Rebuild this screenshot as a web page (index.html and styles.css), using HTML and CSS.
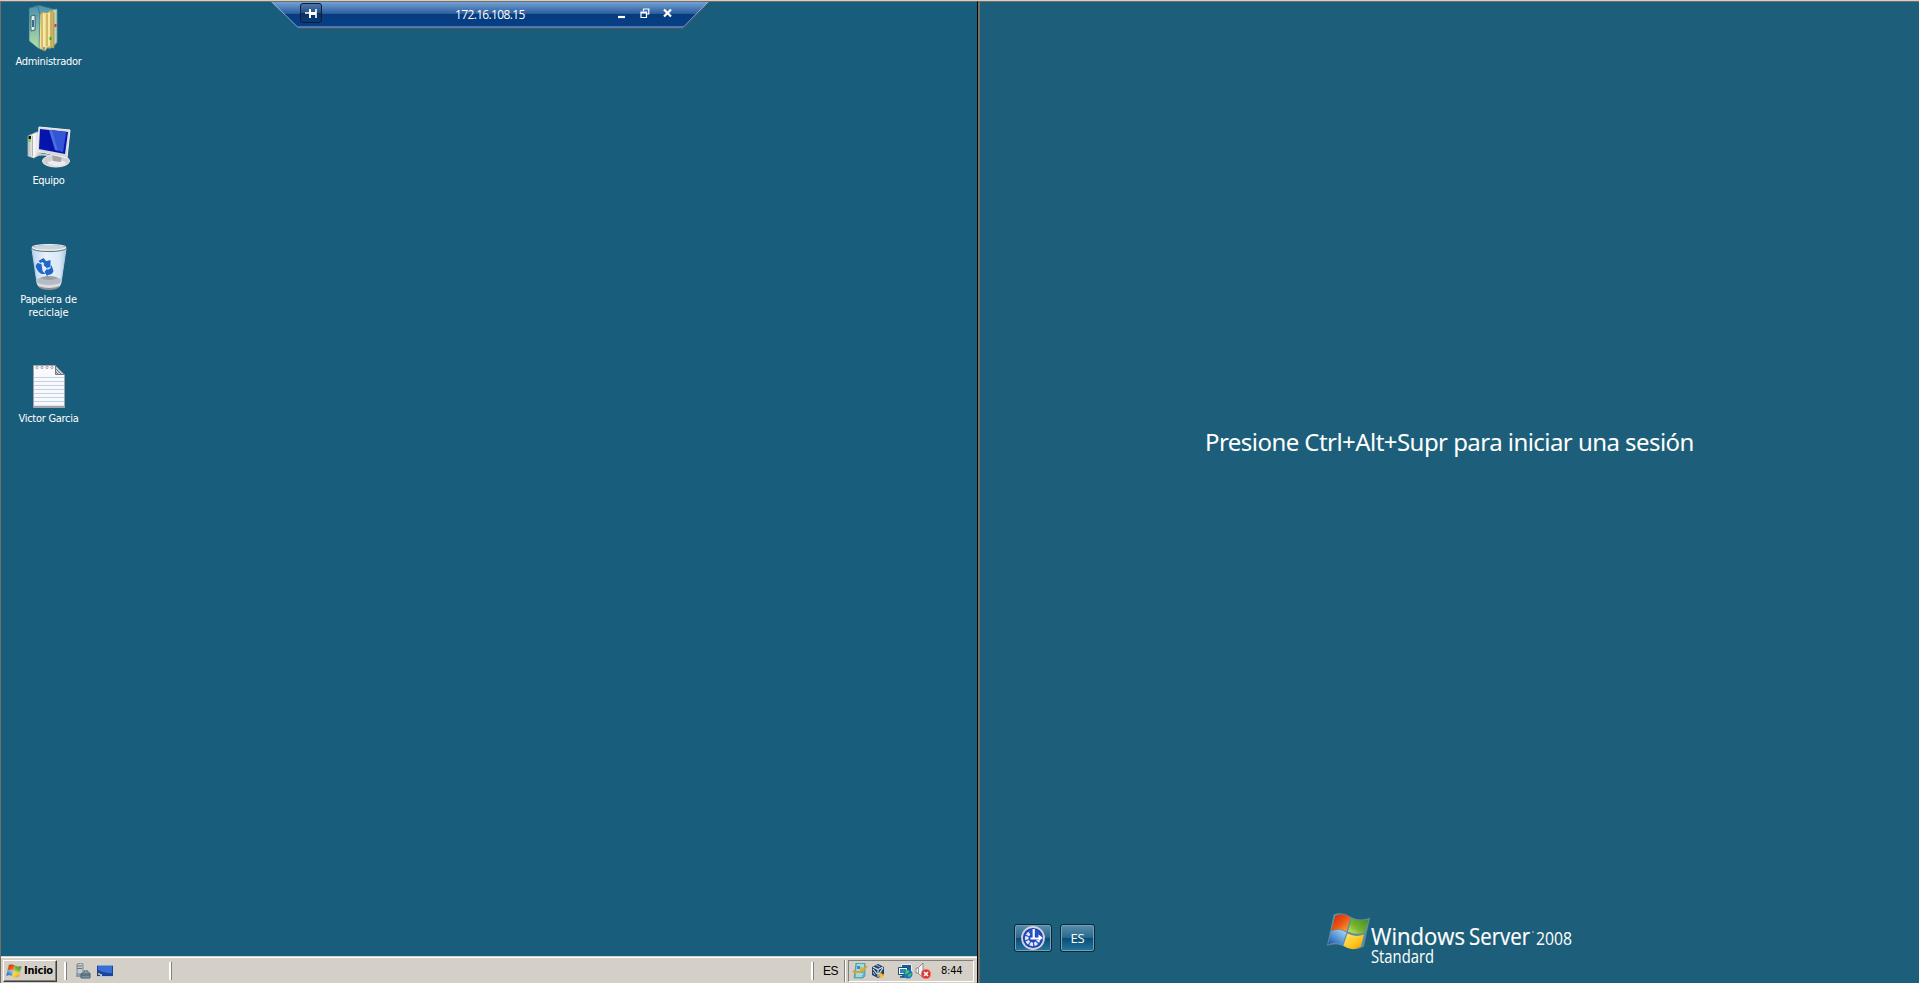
FILE: index.html
```html
<!DOCTYPE html>
<html lang="es">
<head>
<meta charset="utf-8">
<title>Escritorio remoto</title>
<link rel="stylesheet" href="styles.css">
</head>
<body>
<svg width="0" height="0" class="defs">
  <defs>
    <linearGradient id="red" x1="0" y1="0" x2="1" y2="1"><stop offset="0" stop-color="#c9230c"/><stop offset=".55" stop-color="#ee5a14"/><stop offset="1" stop-color="#fcb14c"/></linearGradient>
    <linearGradient id="green" x1="1" y1="0" x2="0" y2="1"><stop offset="0" stop-color="#3f8b1c"/><stop offset=".6" stop-color="#79b52e"/><stop offset="1" stop-color="#d4e873"/></linearGradient>
    <linearGradient id="blue" x1="0" y1="1" x2="1" y2="0"><stop offset="0" stop-color="#1c4da6"/><stop offset=".5" stop-color="#5d9bd8"/><stop offset="1" stop-color="#b8dcf4"/></linearGradient>
    <linearGradient id="yellow" x1="0" y1="0" x2="1" y2="1"><stop offset="0" stop-color="#ffe679"/><stop offset=".6" stop-color="#fec619"/><stop offset="1" stop-color="#f08c0c"/></linearGradient>
    <linearGradient id="page" x1="0" y1="0" x2="1" y2="0"><stop offset="0" stop-color="#f7e9a2"/><stop offset=".75" stop-color="#e8cf78"/><stop offset="1" stop-color="#c0a355"/></linearGradient>
    <linearGradient id="cover" x1="0" y1="0" x2="0" y2="1"><stop offset="0" stop-color="#4e90b0"/><stop offset=".5" stop-color="#83bca8"/><stop offset="1" stop-color="#b5dfa9"/></linearGradient>
    <linearGradient id="metal" x1="0" y1="0" x2="1" y2="0"><stop offset="0" stop-color="#b8b8b8"/><stop offset=".4" stop-color="#fafafa"/><stop offset="1" stop-color="#b3b3b5"/></linearGradient>
    <linearGradient id="bin" x1="0" y1="0" x2="1" y2="0"><stop offset="0" stop-color="#b9d6f0"/><stop offset=".4" stop-color="#e9f1fb"/><stop offset=".8" stop-color="#d9e9f8"/><stop offset="1" stop-color="#a9cbe3"/></linearGradient>
    <linearGradient id="bar" x1="0" y1="0" x2="0" y2="1"><stop offset="0" stop-color="#73a1d3"/><stop offset=".45" stop-color="#2d5f9f"/><stop offset=".47" stop-color="#063b7d"/><stop offset="1" stop-color="#083f86"/></linearGradient>
    <radialGradient id="orb"><stop offset="0" stop-color="#1a3fb4"/><stop offset=".7" stop-color="#2457cf"/><stop offset="1" stop-color="#152b86"/></radialGradient>
    <symbol id="flag" viewBox="0 0 42 37">
      <path fill="#8fb7c4" opacity=".55" d="M6.500 1.500Q15-2 23 3.500q9 5 19 1L36 33q-8 4-17 1Q10 28 0 32z"/>
      <path fill="url(#red)" d="M8 3q7-4 15 1l-4 14q-7-4-15-.500z"/>
      <path fill="url(#green)" d="M24 5q8 4 16.500 1l-4 13q-8 3-16-1z"/>
      <path fill="url(#blue)" d="M4 18q8-4 15 1l-4 12q-7-4-14 0z"/>
      <path fill="url(#yellow)" d="M20 20q8 4 16 1l-3 12q-8 5-17-1z"/>
    </symbol>
  </defs>
</svg>
<main class="screens">
  <section class="desktop">
    <div class="icons">
      <div class="item">
        <svg class="pic" width="48" height="48" viewBox="0 0 48 48">
          <path d="M5 3l8-3 19 5v33l-7 6-20-8z" fill="url(#cover)" stroke="#35768a" stroke-width=".8"/>
          <path d="M27 5l5-1v33l-5 6z" fill="#b7d6c0" stroke="#5b958c" stroke-width=".7"/>
          <path d="M13 11l5-4 4 1 4-3 3 3v35l-6-1-3 4-7-3z" fill="url(#page)" stroke="#a18e47" stroke-width=".6"/>
          <path d="M17 8v37M22 9v32M26 6v36" stroke="#b29a4f" stroke-width="1"/>
          <path d="M19 9v36M24 8v33" stroke="#fbf0b8" stroke-width="1.300"/>
          <path d="M4 3l9-2 2 9-1 34-10-8z" fill="url(#cover)" stroke="#2b6c7e" stroke-width=".7"/>
          <path d="M6 11l4-1v15l-4 1z" fill="#e4f1ec" stroke="#234c5d" stroke-width=".8"/><path d="M7 15h2v7H7z" fill="#376d8c"/>
          <path d="M30.500 19v3" stroke="#e12c31" stroke-width="2"/><path d="M25.500 32v3" stroke="#27b236" stroke-width="2"/><path d="M19 42v3" stroke="#588bb6" stroke-width="1.500"/>
        </svg>
        <span class="label w-admin">Administrador</span>
      </div>
      <div class="item">
        <svg class="pic" width="48" height="48" viewBox="0 0 48 48">
          <path d="M3 12l9-4 6 3v17l-9 6-6-2z" fill="url(#metal)" stroke="#c4c4c4" stroke-width=".7"/>
          <path d="M7.500 12v20" stroke="#a4a4a4" stroke-width=".8"/><path d="M3.500 12h2.500v3H3.500z" fill="#111"/><path d="M3.500 15h2v3h-2z" fill="#4be21e"/>
          <path d="M11 32q5-3 14 0" fill="none" stroke="#ccc" stroke-width="2"/>
          <ellipse cx="31" cy="37" rx="13.500" ry="6" fill="#cfcfcf" stroke="#f0f0f0"/><ellipse cx="32" cy="39" rx="9" ry="3" fill="#ececec"/>
          <path d="M27 29l10 2-1 7-8-1z" fill="#a5a5a5"/>
          <path d="M14 3l31 3-3 28-30-7z" fill="#d5d7dc" stroke="#f2f2f2"/>
          <path d="M15 5l28 3-3 22-26-5z" fill="#0614ad"/>
          <path d="M24 6l17 2-3 20-8-2z" fill="#4a6fe0"/><path d="M27 6l15 2-4 20-5-1z" fill="#1d3cc9" opacity=".5"/>
        </svg>
        <span class="label w-equipo">Equipo</span>
      </div>
      <div class="item">
        <svg class="pic" width="48" height="48" viewBox="0 0 48 48">
          <path d="M7 6h34l-5 34q-1 6-12 6-11 0-12-6z" fill="url(#bin)" stroke="#b9cfe0"/>
          <path d="M12 36q12-6 24 0l-1 6q-3 4-11 4t-11-4z" fill="#b4bcc2"/><path d="M15 35q9-4 18 0-9 4-18 0z" fill="#99a0a5"/>
          <path d="M12 40q12 4 24 0-1 6-12 6t-12-6z" fill="#dadddf"/><path d="M13 43q11 4 22 0-2 4-11 4t-11-4z" fill="#8d8f91"/>
          <ellipse cx="24" cy="5" rx="17.500" ry="3.600" fill="#c2d4df" stroke="#6b7175"/><ellipse cx="24" cy="4.300" rx="17" ry="2.800" fill="none" stroke="#f4f4f4"/>
          <g fill="#2167c8" transform="translate(-1.500 -1)"><path d="M15 19l5-3 5 6-3 1-3-3-2 1z"/><path d="M23 19l4-1 0 7-4 1-3-3z"/><path d="M14 21l4 1 1 7 3 3-4 0q-4-2-6-8z"/><path d="M21 30l3-4v2l3-2 1-3 2 6q-1 4-6 4v2z"/></g>
        </svg>
        <span class="label w-bin">Papelera de<br>reciclaje</span>
      </div>
      <div class="item">
        <svg class="pic" width="48" height="48" viewBox="0 0 48 48">
          <path d="M8.500 3.500h22l9 9v33h-31z" fill="#f8f8fd" stroke="#a2a2a9"/>
          <path d="M9 15.500h30M9 19.500h30M9 23.500h30M9 27.500h30M9 31.500h30M9 35.500h30M9 39.500h30" stroke="#bfd4e7"/>
          <path d="M9 44.500h31" stroke="#a3a5a9" stroke-width="1.500"/>
          <path d="M30.500 3.500l9 9h-9z" fill="#cacbd1" stroke="#777981"/><path d="M31 7l5 5M31 10l3 3" stroke="#777981"/>
          <g fill="#e8e8ed" stroke="#9b9ba2" stroke-width=".8"><circle cx="12" cy="5.500" r="1.200"/><circle cx="17" cy="5.500" r="1.200"/><circle cx="22" cy="5.500" r="1.200"/><circle cx="27" cy="5.500" r="1.200"/></g>
        </svg>
        <span class="label w-victor">Victor Garcia</span>
      </div>
    </div>

    <div class="connection">
      <svg class="connection-shape" width="440" height="27" viewBox="0 0 440 27">
        <path d="M0 0h438l-25.500 25.500h-386z" fill="url(#bar)"/><path d="M1 0l25.500 25h386L437 0" fill="none" stroke="#8eb0dc"/><path d="M27 26.500h385L438.500 0" fill="none" stroke="#4f575c"/>
      </svg>
      <span class="pin"><svg width="14" height="12" viewBox="0 0 14 12"><path d="M1 6h4M12 2v9" fill="none" stroke="#fff" stroke-width="1.600"/><path d="M6 2v9" stroke="#fff" stroke-width="2"/><path d="M6 5h6v3H6z" fill="#fff"/></svg></span>
      <span class="address">172.16.108.15</span>
      <svg class="controls" width="58" height="14" viewBox="0 0 58 14"><g fill="none" stroke="#fff"><path d="M1 10h7" stroke-width="2.200"/><path d="M26.500 4v-2M26 2h6.500M31.800 2v5h-2" stroke-width="1.200"/><path d="M24 5h5.500v5.500H24zM24 6h5" stroke-width="1.200"/><path d="M47 2.500l7 7M54 2.500l-7 7" stroke-width="2.200"/></g></svg>
    </div>

    <footer class="taskbar">
      <div class="start"><svg width="16" height="16" viewBox="0 0 42 37"><use href="#flag"/></svg><b>Inicio</b></div>
      <i class="grip grip-a"></i>
      <div class="quick">
        <svg width="16" height="16" viewBox="0 0 16 16"><path d="M2 1l4-1 2 1v10H2z" fill="#c6cbd0" stroke="#697682" stroke-width=".8"/><path d="M2 3h5M2 5.500h5" stroke="#687684"/><path d="M1 11h7v3H1z" fill="#8c9ba8"/><path d="M7 10h8v5H6v-4z" fill="#7893a6" stroke="#476276"/><path d="M9 9V8h4v1M6 12h9" fill="none" stroke="#40596c"/></svg>
        <svg width="16" height="16" viewBox="0 0 16 16"><path d="M0 2h16v12H0z" fill="#18449a"/><path d="M1 3h14v7q-7 1-14-3z" fill="#3770d0"/><path d="M0 2.500h16" stroke="#7ea2da"/><path d="M0 13.500h16" stroke="#b9c4d5"/><path d="M1 10h2v2H1z" fill="#f2a235"/><path d="M3 11h2v3H3z" fill="#9bd0f3"/></svg>
      </div>
      <i class="grip grip-b"></i>
      <span class="fill"></span>
      <i class="grip"></i>
      <span class="lang">ES</span>
      <i class="edge"></i>
      <div class="tray">
        <svg width="16" height="16" viewBox="0 0 16 16"><path d="M4 0h9v13l-2 2H2z" fill="#62b8c6" stroke="#318896" stroke-width=".6"/><path d="M5 1h7v7H4z" fill="#a1dce2"/><path d="M1 8q5 5 14-5" fill="none" stroke="#ef9c27" stroke-width="2"/><path d="M4 11h7M4 13h6" stroke="#e5f7f3"/><path d="M5 3h3v3H5z" fill="#4c83be"/><path d="M8 4h3v3H8z" fill="#b7c64b"/></svg>
        <svg width="16" height="16" viewBox="0 0 16 16"><path d="M8 1l6 3v8l-6 3-6-3V4z" fill="#253e65"/><path d="M3 4l5 2.500L13 4M8 6v8M3 6l4 5M13 5l-4 6" fill="none" stroke="#d2e1ed" stroke-width="1.200"/><path d="M6 2l4 2M3 9l2 3" stroke="#a4bed6"/><path d="M11 9l1 2 2.500.5-2 1.500.5 2.500-2-1-2 1 .5-2.500-2-1.500 2.500-.5z" fill="#f6b932"/></svg>
        <svg class="net" width="16" height="16" viewBox="0 0 16 16"><path d="M4.500 1.500h10v8h-10z" fill="#1d5c8c" stroke="#e4eef4"/><path d="M1.500 4.500h9v7h-9z" fill="#fff" stroke="#154f79"/><path d="M3 6h6v4H3z" fill="#2d86b8"/><path d="M3 14h6M6 12v2" stroke="#18496d" stroke-width="1.500"/><circle cx="11" cy="11" r="4.500" fill="#1672ce"/><path d="M9 7q4 0 3 2.500l-3 2-1-2zM12 11l3-1-2 4-2-1z" fill="#4cca3d"/></svg>
        <svg width="16" height="16" viewBox="0 0 16 16"><path d="M1 5h2l5-5v15l-5-5H1z" fill="#f3f4f5" stroke="#777" stroke-width=".8"/><path d="M3.500 5v5" stroke="#999"/><circle cx="11" cy="11" r="4.800" fill="#df322d" stroke="#f78a80" stroke-width=".7"/><path d="M9 9l4 4M13 9l-4 4" stroke="#fff" stroke-width="1.700"/></svg>
        <time>8:44</time>
      </div>
    </footer>
  </section>

  <section class="login">
    <h1>Presione Ctrl+Alt+Supr para iniciar una sesión</h1>
    <footer class="login-foot">
      <div class="buttons">
        <span class="button access"><svg width="26" height="26" viewBox="0 0 26 26"><circle cx="13" cy="13" r="11" fill="url(#orb)" stroke="#d5d2df" stroke-width="1.800"/><path d="M9.500 8.300A6 6 0 1 0 18.500 15" fill="none" stroke="#e4e8fa" stroke-width="3.600" stroke-dasharray="3 1.200"/><path d="M13.700 4v9.500H10.500M13 13.500h7" fill="none" stroke="#fff" stroke-width="2.200"/><path d="M18.500 9.500l4.500 3.500-4.500 3z" fill="#fff"/></svg></span>
        <span class="button language">ES</span>
      </div>
      <div class="brand">
        <svg width="43" height="38" viewBox="0 0 42 37"><use href="#flag"/></svg>
        <svg class="brand-text" width="206" height="48" viewBox="0 0 206 48"><text class="name" x="0" y="26" textLength="94" lengthAdjust="spacingAndGlyphs">Windows</text><text class="name" x="98" y="26" textLength="61" lengthAdjust="spacingAndGlyphs">Server</text><circle cx="162" cy="13" r=".8" opacity=".8"/><text class="year" x="165" y="26" textLength="36" lengthAdjust="spacingAndGlyphs">2008</text><text class="edition" x="0" y="44" textLength="63" lengthAdjust="spacingAndGlyphs">Standard</text></svg>
      </div>
    </footer>
  </section>
</main>
</body>
</html>
```

FILE: styles.css
```css
* { box-sizing: border-box; }
body { margin: 0; background: #185d7b; font-family: "DejaVu Sans Condensed", "DejaVu Sans", sans-serif; color: #fff; overflow: hidden; }
.defs { position: absolute; }
svg { display: block; flex: none; }
.screens { display: flex; width: 1919px; height: 983px; border-top: 1px solid #d4d0c8; }
.desktop { position: relative; display: flex; flex-direction: column; width: 978px; border: solid #716f6a; border-width: 1px 0 0 1px; border-right: 1px solid #000; background: #185d7b; }
.icons { flex: 1; padding-top: 3px; }
.item { display: flex; flex-direction: column; align-items: center; width: 95px; height: 119px; }
.label { margin-top: 2px; font: 11px/13px "DejaVu Sans Condensed", sans-serif; text-align: center; white-space: nowrap; }
.w-admin { letter-spacing: -.3px; }
.w-equipo, .w-victor { letter-spacing: -.28px; }
.w-bin { letter-spacing: -.15px; }

.connection { position: absolute; top: 0; left: 270px; width: 440px; height: 27px; display: flex; align-items: flex-start; }
.connection-shape { position: absolute; left: 0; top: 0; }
.pin, .address, .controls { position: relative; }
.pin { display: flex; align-items: center; justify-content: center; width: 22px; height: 20px; margin: 1px 0 0 29px; border: 1px solid #071e3d; border-radius: 3px; background: linear-gradient(#4c77a8, #254d7e 50%, #082f63 52%, #0c3c72); }
.address { margin: 4px 0 0 133px; width: 71px; font: 12px/18px "Open Sans", sans-serif; letter-spacing: -.65px; white-space: nowrap; }
.controls { margin: 5px 0 0 91px; }

.taskbar { display: flex; align-items: center; height: 27px; padding: 3px 3px 1px 2px; background: #d4d0c8; border-top: 1px solid #d4d0c8; box-shadow: inset 0 1px #fff; color: #000; }
.start { display: flex; align-items: center; gap: 2px; width: 54px; height: 22px; padding-left: 2px; border: 1px solid; border-color: #fff #404040 #404040 #fff; box-shadow: inset -1px -1px #808080; }
.start b { font: bold 11px/18px "DejaVu Sans Condensed", sans-serif; letter-spacing: -.2px; }
.grip { width: 3px; height: 18px; background: #fff; border-right: 1px solid #808080; }
.grip-a { margin-left: 7px; }
.quick { display: flex; gap: 6px; margin-left: 8px; }
.grip-b { margin-left: 56px; }
.fill { flex: 1; }
.lang { width: 30px; padding-left: 9px; font: 12px/20px "Liberation Sans", sans-serif; letter-spacing: -.5px; }
.edge { width: 2px; height: 22px; border-left: 1px solid #808080; border-right: 1px solid #fff; }
.tray { display: flex; align-items: center; width: 126px; height: 22px; margin-left: 2px; padding: 0 4px 0 3px; border: 1px solid; border-color: #808080 #fff #fff #808080; gap: 2px; }
.net { margin-left: 9px; }
.tray time { margin-left: 8px; font: 11px/18px "DejaVu Sans Condensed", sans-serif; letter-spacing: -.2px; }

.login { flex: 1; display: flex; flex-direction: column; border: solid #716f6a; border-width: 1px 0 0 2px; background: #1d5f7a; }
.login h1 { margin: 420px 0 0; padding-left: 225px; font: 24px/40px "Noto Sans", sans-serif; white-space: nowrap; letter-spacing: -.55px; }
.login-foot { display: flex; align-items: flex-start; margin-top: auto; height: 73px; padding-left: 34px; }
.buttons { display: flex; gap: 8px; padding-top: 14px; }
.button { display: flex; align-items: center; justify-content: center; height: 28px; border: 1px solid #092938; border-radius: 3px; background: linear-gradient(#5a8eaa, #29698e 48%, #0c4b73 50%, #23779e); box-shadow: inset 0 0 0 1px #6fa3b9; font: 13px "Open Sans", sans-serif; letter-spacing: -.3px; }
.access { width: 38px; }
.language { width: 35px; }
.brand { display: flex; margin-left: 232px; padding-top: 3px; }
.brand-text { margin: 6px 0 0 1px; fill: #fff; font-family: "Open Sans", "Noto Sans", sans-serif; }
.name { font-size: 24px; stroke: #fff; stroke-width: .2px; }
.year { font-size: 18px; }
.edition { font-size: 18px; }
```
